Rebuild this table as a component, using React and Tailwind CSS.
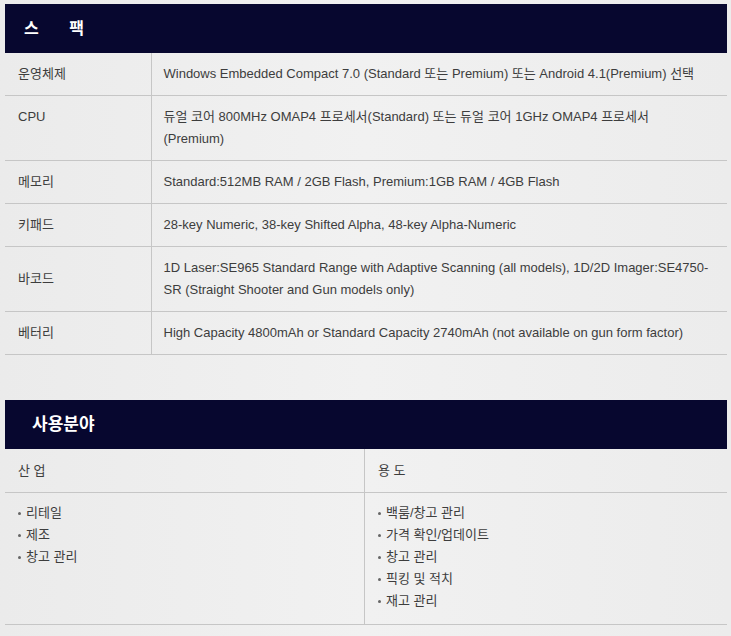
import React from 'react'

const specs = [
  { label: '운영체제', value: 'Windows Embedded Compact 7.0 (Standard 또는 Premium) 또는 Android 4.1(Premium) 선택' },
  { label: 'CPU', value: '듀얼 코어 800MHz OMAP4 프로세서(Standard) 또는 듀얼 코어 1GHz OMAP4 프로세서\n(Premium)', top: true },
  { label: '메모리', value: 'Standard:512MB RAM / 2GB Flash, Premium:1GB RAM / 4GB Flash' },
  { label: '키패드', value: '28-key Numeric, 38-key Shifted Alpha, 48-key Alpha-Numeric' },
  { label: '바코드', value: '1D Laser:SE965 Standard Range with Adaptive Scanning (all models), 1D/2D Imager:SE4750-SR (Straight Shooter and Gun models only)' },
  { label: '베터리', value: 'High Capacity 4800mAh or Standard Capacity 2740mAh (not available on gun form factor)' },
]

const industries = ['리테일', '제조', '창고 관리']
const uses = ['백룸/창고 관리', '가격 확인/업데이트', '창고 관리', '픽킹 및 적치', '재고 관리']

const BulletList = ({ items }) => (
  <ul>
    {items.map((item) => (
      <li key={item} className="flex items-center leading-[22px]">
        <span className="w-[3px] h-[3px] rounded-full bg-[#666] mr-[5px]"></span>
        {item}
      </li>
    ))}
  </ul>
)

export default function App() {
  return (
    <div
      className="w-[731px] h-[636px] overflow-hidden bg-gradient-to-r from-[#ebebeb] via-[#f1f1f1] to-[#ececec] pt-[4px] pl-[5px] pr-[4px] text-[13px] text-[#3d3d3d]"
      style={{ fontFamily: '"Liberation Sans", "Noto Sans CJK KR", sans-serif' }}
    >
      {/* 스펙 */}
      <section>
        <div className="h-[49px] bg-[#07072f] flex items-center px-[19px]">
          <h2 className="text-white text-[16px] font-bold [word-spacing:26px]">스 팩</h2>
        </div>
        <table className="w-full border-collapse">
          <tbody>
            {specs.map((row) => (
              <tr key={row.label} className="border-b border-[#c6c6c6]">
                <td
                  className={`w-[146px] border-r border-[#c6c6c6] pl-[13px] py-[10px] leading-[22px] ${row.top ? 'align-top' : 'align-middle'}`}
                >
                  {row.label}
                </td>
                <td className="pl-[12px] pr-[10px] py-[10px] leading-[22px] whitespace-pre-line">{row.value}</td>
              </tr>
            ))}
          </tbody>
        </table>
      </section>

      {/* 사용분야 */}
      <section className="mt-[45px]">
        <div className="h-[49px] bg-[#07072f] flex items-center px-[27px]">
          <h2 className="text-white text-[17px] font-bold">사용분야</h2>
        </div>
        <div className="grid grid-cols-[360px_1fr] border-b border-[#c6c6c6]">
          <div className="border-r border-[#c6c6c6]">
            <div className="h-[44px] flex items-center pl-[13px] border-b border-[#c6c6c6]">산 업</div>
            <div className="pl-[13px] pt-[9px] h-[131px]">
              <BulletList items={industries} />
            </div>
          </div>
          <div>
            <div className="h-[44px] flex items-center pl-[13px] border-b border-[#c6c6c6]">용 도</div>
            <div className="pl-[13px] pt-[9px] h-[131px]">
              <BulletList items={uses} />
            </div>
          </div>
        </div>
      </section>
    </div>
  )
}
